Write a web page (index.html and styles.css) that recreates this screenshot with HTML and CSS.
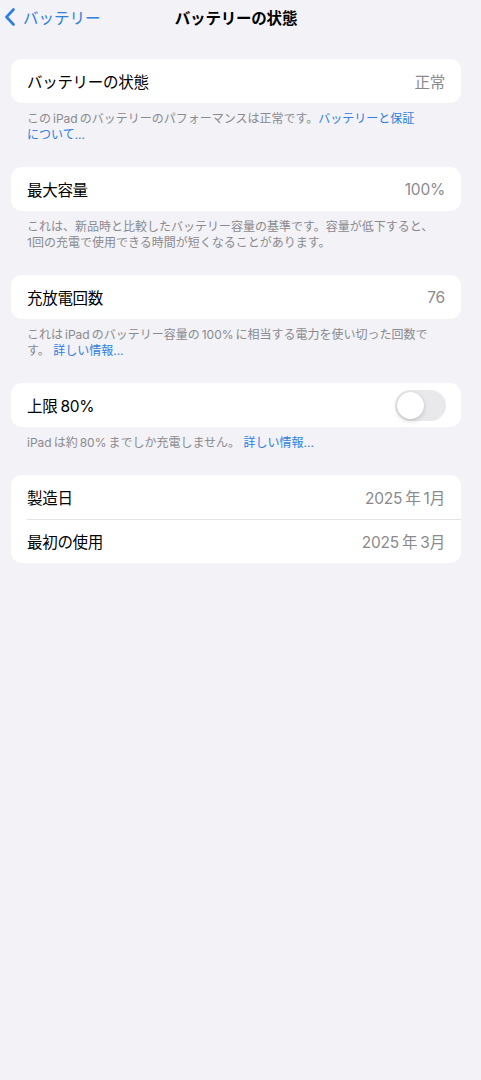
FILE: index.html
```html
<!DOCTYPE html>
<html lang="ja">
<head>
<meta charset="utf-8">
<title>バッテリーの状態</title>
<link rel="stylesheet" href="styles.css">
</head>
<body>
<div class="page">
  <header class="nav">
    <a class="back" href="#">
      <svg class="chev" width="12" height="18" viewBox="0 0 12 18"><path d="M9.5 1.5 L2.5 9 L9.5 16.5" fill="none" stroke="currentColor" stroke-width="2.6" stroke-linecap="round" stroke-linejoin="round"/></svg>
      <span>バッテリー</span>
    </a>
    <h1 class="title">バッテリーの状態</h1>
  </header>

  <section class="group">
    <div class="card">
      <div class="row"><span class="label">バッテリーの状態</span><span class="value">正常</span></div>
    </div>
    <p class="foot">この<span class="ls">iPad</span>のバッテリーのパフォーマンスは正常です。<a href="#">バッテリーと保証<br>について...</a></p>
  </section>

  <section class="group">
    <div class="card">
      <div class="row"><span class="label">最大容量</span><span class="value">100%</span></div>
    </div>
    <p class="foot">これは、新品時と比較したバッテリー容量の基準です。容量が低下すると、<br>1回の充電で使用できる時間が短くなることがあります。</p>
  </section>

  <section class="group">
    <div class="card">
      <div class="row"><span class="label">充放電回数</span><span class="value">76</span></div>
    </div>
    <p class="foot">これは<span class="ls">iPad</span>のバッテリー容量の<span class="ls">100%</span>に相当する電力を使い切った回数で<br>す。 <a href="#">詳しい情報...</a></p>
  </section>

  <section class="group">
    <div class="card">
      <div class="row"><span class="label">上限<span class="lsl">80%</span></span><span class="toggle"><span class="knob"></span></span></div>
    </div>
    <p class="foot"><span class="lsr">iPad</span>は約<span class="ls">80%</span>までしか充電しません。 <a href="#">詳しい情報...</a></p>
  </section>

  <section class="group">
    <div class="card">
      <div class="row"><span class="label">製造日</span><span class="value"><span class="lsr">2025</span>年<span class="lsl">1</span>月</span></div>
      <div class="row sep"><span class="label">最初の使用</span><span class="value"><span class="lsr">2025</span>年<span class="lsl">3</span>月</span></div>
    </div>
  </section>
</div>
</body>
</html>
```

FILE: styles.css
```css
html, body {
  margin: 0;
  padding: 0;
  background: #f2f2f7;
}
body {
  font-family: "Inter", "Noto Sans CJK JP", sans-serif;
  color: #000;
  height: 1080px;
}
.page {
  width: 450px;
  margin-left: 11px;
}
.nav {
  position: relative;
  height: 34px;
  margin-bottom: 25px;
  display: flex;
  align-items: center;
  justify-content: center;
}
.back {
  position: absolute;
  left: -7px;
  top: 0;
  height: 34px;
  display: flex;
  align-items: center;
  gap: 7px;
  color: #2f7ee0;
  text-decoration: none;
  font-size: 15.5px;
}
.chev { display: block; margin-top: -1px; }
.title {
  margin: 0;
  font-size: 15.5px;
  font-weight: 700;
  letter-spacing: -0.2px;
}
.group {
  margin-bottom: 24px;
}
.card {
  background: #fff;
  border-radius: 11px;
  overflow: hidden;
}
.row {
  height: 44px;
  display: flex;
  align-items: center;
  justify-content: space-between;
  padding: 0 16px;
  font-size: 15.5px;
  position: relative;
}
.row.sep::before {
  content: "";
  position: absolute;
  left: 16px;
  right: 0;
  top: 0;
  height: 1px;
  background: #e4e4e7;
}
.label { letter-spacing: -0.3px; }
.value { color: #8a8a8e; letter-spacing: -0.2px; }
.ls { margin: 0 3px; }
.lsl { margin-left: 3px; }
.lsr { margin-right: 3px; }
.foot .ls { margin: 0 2px; }
.foot .lsr { margin-right: 2px; }
.toggle {
  width: 51px;
  height: 31px;
  border-radius: 16px;
  background: #e9e9eb;
  margin-right: -1px;
  position: relative;
}
.knob {
  position: absolute;
  left: 2px;
  top: 2px;
  width: 27px;
  height: 27px;
  border-radius: 50%;
  background: #fff;
  box-shadow: 0 2px 5px rgba(0,0,0,0.16), 0 0 1px rgba(0,0,0,0.15);
}
.foot {
  margin: 8px 0 0;
  padding: 0 16px;
  font-size: 12px;
  line-height: 16px;
  color: #8a8a8e;
  white-space: nowrap;
}
.foot a {
  color: #2f7ee0;
  text-decoration: none;
}
```
